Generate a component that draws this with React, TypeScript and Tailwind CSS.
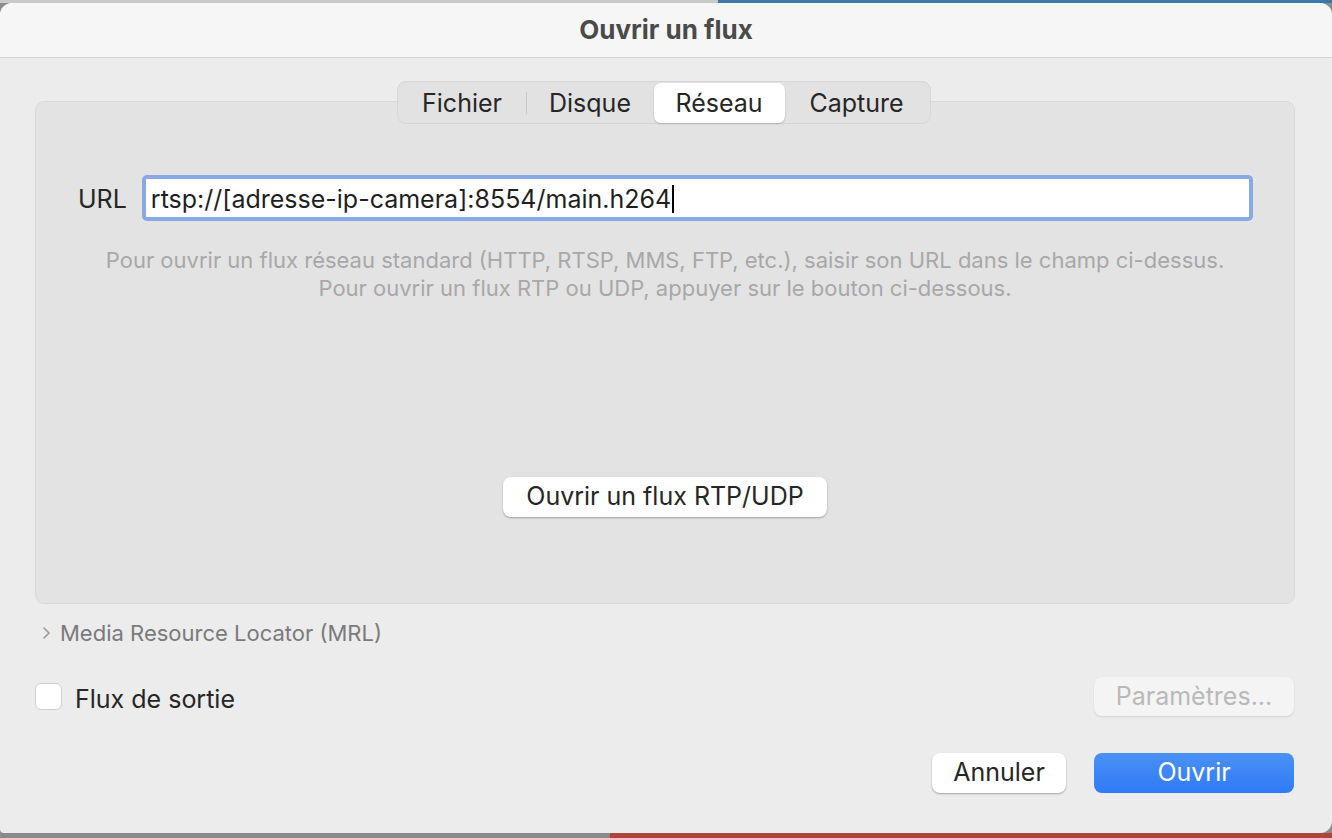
import React from "react";

const tabs = [
  { label: "Fichier", w: "w-[127px]" },
  { label: "Disque", w: "w-[127px]" },
  { label: "Réseau", w: "w-[131px]" },
  { label: "Capture", w: "w-[144px]" },
];

function Tabs() {
  return (
    <div className="flex items-center h-[43px] rounded-[9px] bg-[#e2e2e2] border border-[#d6d6d6] px-px">
      {tabs.map((t, i) => {
        const active = t.label === "Réseau";
        return (
          <React.Fragment key={t.label}>
            {i === 1 && <div className="w-px h-[22px] bg-[#c9c9c9]" />}
            <div
              className={
                active
                  ? `${t.w} h-[40px] pt-[2px] flex items-center justify-center rounded-[7px] bg-white shadow-[0_1px_2px_rgba(0,0,0,0.2)] text-[25px] text-[#262626]`
                  : `${t.w} h-[40px] pt-[2px] flex items-center justify-center text-[25px] text-[#262626]`
              }
            >
              {t.label}
            </div>
          </React.Fragment>
        );
      })}
    </div>
  );
}

export default function App() {
  return (
    <div className="w-[1332px] h-[838px] flex flex-col bg-[#8d8d8d] font-['Inter','Liberation_Sans',sans-serif] overflow-hidden">
      {/* backdrop strip top */}
      <div className="h-[3px] flex">
        <div className="w-[718px] bg-[#c9c9c9]" />
        <div className="flex-1 bg-[#3b77a9]" />
      </div>

      <div className="flex-1 flex flex-col rounded-t-[12px] rounded-br-[12px] rounded-bl-[4px] bg-[#ececec] overflow-hidden">
        {/* Title bar */}
        <div className="h-[55px] shrink-0 flex items-center justify-center bg-[#f6f6f6] border-b border-[#d2d2d2]">
          <span className="text-[26px] font-bold text-[#4a4a4a] -mt-[2px]">Ouvrir un flux</span>
        </div>

        <div className="flex-1 flex flex-col pl-[35px] pr-[38px]">
          {/* Tab view */}
          <div className="mt-[23px] flex justify-center relative z-10 pr-[2px]">
            <Tabs />
          </div>
          <div className="-mt-[23px] w-[1260px] h-[503px] rounded-[9px] bg-[#e3e3e3] border border-[#d9d9d9] flex flex-col">
            <div className="mt-[73px] flex items-center pl-[42px] pr-[41px]">
              <span className="text-[25px] text-[#262626] pt-[3px]">URL</span>
              <div className="ml-[15px] flex-1 h-[46px] rounded-[5px] bg-[#88a9e6] p-[4px]">
                <div className="h-full bg-white flex items-center pl-[5px] pt-[3px] text-[25px] text-[#1f1f1f]">
                  <span>rtsp://[adresse-ip-camera]:8554/main.h264</span>
                  <span className="w-[2px] h-[28px] bg-black ml-[1px] -mt-[2px]" />
                </div>
              </div>
            </div>
            <div className="mt-[25px] text-center text-[22px] leading-[28px] text-[#a8a8a8]">
              <p>Pour ouvrir un flux réseau standard (HTTP, RTSP, MMS, FTP, etc.), saisir son URL dans le champ ci-dessus.</p>
              <p>Pour ouvrir un flux RTP ou UDP, appuyer sur le bouton ci-dessous.</p>
            </div>
            <div className="mt-[175px] flex justify-center">
              <button className="h-[40px] w-[324px] rounded-[8px] bg-white shadow-[0_1px_2px_rgba(0,0,0,0.3)] text-[25px] text-[#262626]">
                Ouvrir un flux RTP/UDP
              </button>
            </div>
          </div>

          {/* MRL disclosure */}
          <div className="mt-[16px] flex items-center pl-[6px] h-[26px]">
            <svg width="12" height="16" viewBox="0 0 12 16" className="mr-[7px]">
              <path d="M3 3l5 5-5 5" fill="none" stroke="#9a9a9a" strokeWidth="1.6" strokeLinecap="round" strokeLinejoin="round" />
            </svg>
            <span className="text-[22px] text-[#7a7a7a]">Media Resource Locator (MRL)</span>
          </div>

          {/* Output stream */}
          <div className="mt-[31px] h-[39px] flex items-center justify-between">
            <div className="flex items-center">
              <div className="w-[27px] h-[27px] rounded-[6px] bg-white border border-[#cfcfcf]" />
              <span className="ml-[13px] text-[25px] leading-[30px] text-[#262626] pt-[4px]">Flux de sortie</span>
            </div>
            <button className="h-[39px] w-[200px] rounded-[8px] bg-[#f4f4f4] shadow-[0_1px_2px_rgba(0,0,0,0.12)] text-[25px] text-[#b9b9b9]">
              Paramètres...
            </button>
          </div>

          {/* Dialog buttons */}
          <div className="mt-[37px] flex justify-end gap-[28px]">
            <button className="h-[40px] w-[134px] rounded-[8px] bg-white shadow-[0_1px_2px_rgba(0,0,0,0.3)] text-[25px] text-[#262626]">
              Annuler
            </button>
            <button className="h-[40px] w-[200px] rounded-[8px] bg-gradient-to-b from-[#4a90f6] to-[#2f7bf5] text-[25px] text-white">
              Ouvrir
            </button>
          </div>
        </div>
      </div>

      {/* backdrop strip bottom */}
      <div className="h-[5px] flex">
        <div className="w-[610px] bg-[#8a8a8a]" />
        <div className="flex-1 bg-[#b14638]" />
      </div>
    </div>
  );
}
